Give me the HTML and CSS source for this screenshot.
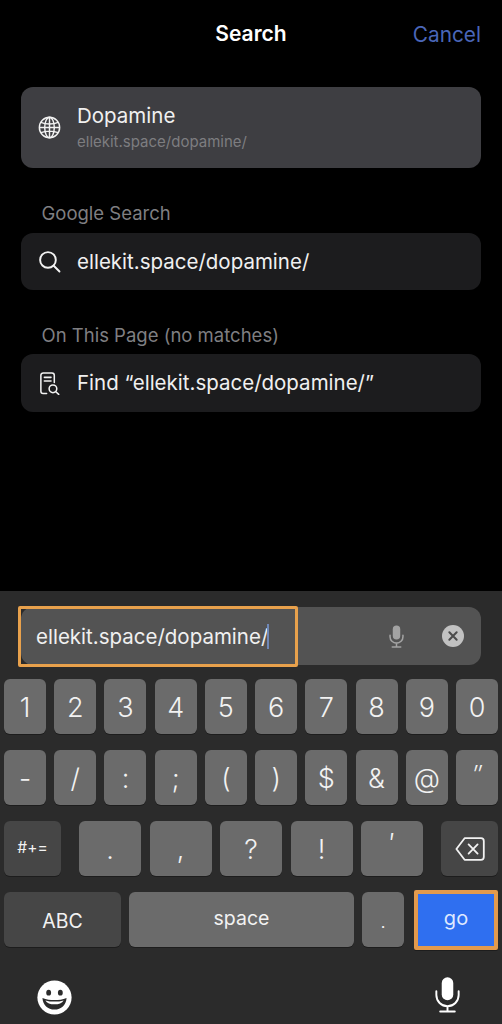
FILE: index.html
```html
<!DOCTYPE html>
<html lang="en">
<head>
<meta charset="utf-8">
<title>Search</title>
<link rel="stylesheet" href="styles.css">
</head>
<body>
<main class="sheet">
  <header class="nav">
    <span class="nav-title">Search</span>
    <span class="nav-cancel">Cancel</span>
  </header>

  <div class="card card-top">
    <svg class="icon" viewBox="0 0 24 24" fill="none" stroke="#f2f2f2" stroke-width="1.5">
      <circle cx="12" cy="12" r="10.6"/>
      <ellipse cx="12" cy="12" rx="5" ry="10.6"/>
      <path d="M12 1.4v21.2M1.4 12h21.2M3 6.6c5 2.2 13 2.2 18 0M3 17.4c5-2.2 13-2.2 18 0"/>
    </svg>
    <div class="stack">
      <span class="title">Dopamine</span>
      <span class="url">ellekit.space/dopamine/</span>
    </div>
  </div>

  <div class="section-label label-google">Google Search</div>
  <div class="card">
    <svg class="icon" viewBox="0 0 24 24" fill="none" stroke="#f2f2f2" stroke-width="2" stroke-linecap="round">
      <circle cx="10.4" cy="10.4" r="8.2"/>
      <path d="M16.4 16.4l6 6"/>
    </svg>
    <span class="title">ellekit.space/dopamine/</span>
  </div>

  <div class="section-label label-page">On This Page (no matches)</div>
  <div class="card card-find">
    <svg class="icon" viewBox="0 0 24 24" fill="none" stroke="#f2f2f2" stroke-width="1.6" stroke-linecap="round">
      <path d="M9 22.4H5.4a2.4 2.4 0 0 1-2.4-2.4V3.4A2.4 2.4 0 0 1 5.4 1h9.2A2.4 2.4 0 0 1 17 3.4V11"/>
      <path d="M6.6 5.6h7M6.6 9.4h7"/>
      <circle cx="15.6" cy="17.6" r="4"/>
      <path d="M18.6 20.6l3 2.8"/>
    </svg>
    <span class="title">Find “ellekit.space/dopamine/”</span>
  </div>
</main>

<section class="keyboard">
  <div class="field">
    <div class="field-text">ellekit.space/dopamine/<span class="caret"></span></div>
    <svg class="field-mic" viewBox="0 0 20 28" fill="none" stroke="#a3a3a3" stroke-width="1.8" stroke-linecap="round">
      <rect x="5.6" y="1" width="8.8" height="16.4" rx="4.4" fill="#a3a3a3" stroke="none"/>
      <path d="M2.4 12.4v1.800a7.600 7.600 0 0 0 15.200 0v-1.800M10 21.800v4.400M5 26.400h10"/>
    </svg>
    <svg class="field-clear" viewBox="0 0 24 24">
      <circle cx="12" cy="12" r="12" fill="#c2c2c2"/>
      <path d="M8 8l8 8M16 8l-8 8" stroke="#4c4c4c" stroke-width="2.2" stroke-linecap="round"/>
    </svg>
  </div>

  <div class="row row-num">
    <span class="key">1</span><span class="key">2</span><span class="key">3</span><span class="key">4</span><span class="key">5</span><span class="key">6</span><span class="key">7</span><span class="key">8</span><span class="key">9</span><span class="key">0</span>
  </div>
  <div class="row row-sym">
    <span class="key">-</span><span class="key">/</span><span class="key">:</span><span class="key">;</span><span class="key">(</span><span class="key">)</span><span class="key">$</span><span class="key">&amp;</span><span class="key">@</span><span class="key key-quote">″</span>
  </div>
  <div class="row row-punct">
    <span class="key key-dark key-side key-small">#+=</span>
    <div class="punct">
      <span class="key key-wide key-low">.</span>
      <span class="key key-wide key-low">,</span>
      <span class="key key-wide">?</span>
      <span class="key key-wide">!</span>
      <span class="key key-wide key-high">′</span>
    </div>
    <span class="key key-dark key-side">
      <svg class="backspace" viewBox="0 0 30 24" fill="none" stroke="#f2f2f2" stroke-width="1.8" stroke-linecap="round" stroke-linejoin="round">
        <path d="M9.600 1.200H26a2.800 2.800 0 0 1 2.800 2.800v16a2.800 2.800 0 0 1-2.800 2.800H9.600L1.400 12z"/>
        <path d="M13.600 7.400l9 9.200M22.600 7.400l-9 9.200"/>
      </svg>
    </span>
  </div>
  <div class="row row-bottom">
    <span class="key key-dark key-abc">ABC</span>
    <span class="key key-space">space</span>
    <span class="key key-dot">.</span>
    <span class="key key-go">go</span>
  </div>
  <div class="tools">
    <svg class="tool-emoji" viewBox="0 0 36 36">
      <circle cx="18" cy="18" r="17.6" fill="#fff"/>
      <ellipse cx="12" cy="13" rx="2.5" ry="3" fill="#2b2b2b"/>
      <ellipse cx="24" cy="13" rx="2.5" ry="3" fill="#2b2b2b"/>
      <path d="M5.600 18.400c4 1.600 8 2.200 12.400 2.200s8.400-.6 12.400-2.200c-.4 7.200-5.600 12-12.400 12S6 25.600 5.600 18.400z" fill="#2b2b2b"/>
      <path d="M8.600 21c3 .8 6 1.200 9.400 1.200s6.400-.4 9.400-1.200c-1.600 2.600-5 4-9.400 4s-7.800-1.400-9.400-4z" fill="#fff"/>
    </svg>
    <svg class="tool-mic" viewBox="0 0 26 38" fill="none" stroke="#fff" stroke-width="2" stroke-linecap="round">
      <rect x="7" y="1" width="12" height="24" rx="6" fill="#fff" stroke="none"/>
      <path d="M1.400 15.600v4a11.600 11.600 0 0 0 23.200 0v-4M13 31.400v5M5.400 36.600h15.200"/>
    </svg>
  </div>
</section>
</body>
</html>
```

FILE: styles.css
```css
* { box-sizing: border-box; }

html, body { margin: 0; padding: 0; }

body {
  width: 502px;
  height: 1024px;
  overflow: hidden;
  display: flex;
  flex-direction: column;
  background: #000;
  color: #f2f2f2;
  font-family: Inter, "Liberation Sans", sans-serif;
}

.sheet {
  flex: 0 0 591px;
  padding: 0 21px;
}

.nav {
  height: 87px;
  padding-bottom: 18px;
  display: flex;
  align-items: center;
  justify-content: flex-end;
  position: relative;
}

.nav-title {
  position: absolute;
  left: 0;
  right: 0;
  top: 20px;
  text-align: center;
  font-size: 21px;
  line-height: 28px;
  font-weight: 600;
  color: #fff;
}

.nav-cancel {
  font-size: 20.800px;
  line-height: 28px;
  color: #4a66b8;
  padding-top: 1px;
}

.card {
  height: 57px;
  border-radius: 12px;
  background: #1c1c1e;
  display: flex;
  align-items: center;
  padding-left: 17px;
}

.card-top {
  height: 81px;
  background: #3e3e42;
}

.card-find {
  height: 58px;
}

.icon {
  flex: none;
  width: 23px;
  height: 23px;
  margin-right: 16px;
}

.stack {
  display: flex;
  flex-direction: column;
  gap: 4px;
  margin-bottom: 1px;
}

.title {
  font-size: 20.500px;
  line-height: 26px;
  color: #f0f0f0;
}

.url {
  font-size: 15px;
  line-height: 18px;
  color: #7d7d80;
}

.section-label {
  padding-left: 20.500px;
  font-size: 18.500px;
  line-height: 24px;
  color: #7f7f82;
}

.label-google { margin-top: 33px; margin-bottom: 8px; }
.label-page { margin-top: 33px; margin-bottom: 7px; }

.keyboard {
  flex: 1;
  background: #2b2b2b;
  display: flex;
  flex-direction: column;
  padding: 16px 4px 0;
}

.field {
  margin: 0 17px;
  height: 58px;
  border-radius: 12px;
  background: #535353;
  display: flex;
  align-items: center;
  font-size: 20.500px;
}

.field-text {
  flex: none;
  width: 280px;
  height: 61px;
  margin: 0 auto 0 -3px;
  border: 3px solid #e8a14c;
  border-radius: 2px;
  padding-left: 15px;
  display: flex;
  align-items: center;
  color: #f0f0f0;
}

.caret {
  width: 2px;
  height: 25px;
  background: #6f88b8;
  margin-left: -1px;
}

.field-mic {
  width: 17px;
  height: 25px;
  margin-right: 37px;
}

.field-clear {
  width: 22px;
  height: 22px;
  margin-right: 17px;
}

.row {
  display: flex;
  justify-content: space-between;
  height: 55px;
}

.row-num { margin-top: 14px; }
.row-sym,
.row-punct { margin-top: 16px; }
.row-bottom { margin-top: 16px; }

.key {
  flex: 0 0 42px;
  height: 55px;
  padding-top: 2px;
  border-radius: 6px;
  background: #6b6b6b;
  box-shadow: 0 1px 0 #1d1d1d;
  display: flex;
  align-items: center;
  justify-content: center;
  font-size: 27px;
  font-weight: 300;
  color: #f2f2f2;
}

.key-quote { font-size: 24px; align-items: flex-start; padding-top: 10px; font-style: italic; }

.key-dark { background: #464646; }

.key-side { flex-basis: 57px; }

.key-small { font-size: 15.500px; font-weight: 400; padding: 0 0 2px; }

.punct {
  flex: none;
  width: 344px;
  display: flex;
  justify-content: space-between;
}

.key-wide { flex-basis: 62px; }
.key-low { align-items: flex-end; padding-bottom: 10px; }
.key-high { align-items: flex-start; padding-top: 6px; }

.backspace { width: 30px; height: 24px; margin-bottom: 2px; }

.row-bottom { justify-content: flex-start; }

.key-abc { flex-basis: 117px; font-size: 19.500px; font-weight: 400; padding-top: 3px; }
.key-space { flex-basis: 225px; margin-left: 8px; font-size: 19.500px; font-weight: 400; padding: 0 0 3px; }
.key-dot { margin-left: 8px; font-size: 20px; }

.key-go {
  flex-basis: 84px;
  height: 60px;
  margin: -2px 0 0 10px;
  padding: 0 0 5px;
  border: 4px solid #e39a4d;
  border-radius: 2px;
  background: #2f6ff0;
  font-size: 20px;
  font-weight: 400;
  color: #dfe9ff;
}

.tools {
  display: flex;
  justify-content: space-between;
  align-items: flex-start;
  padding: 33px 38px 0 33px;
}

.tool-emoji { width: 35px; height: 35px; }
.tool-mic { width: 25px; height: 37px; margin-top: -4px; }
```
